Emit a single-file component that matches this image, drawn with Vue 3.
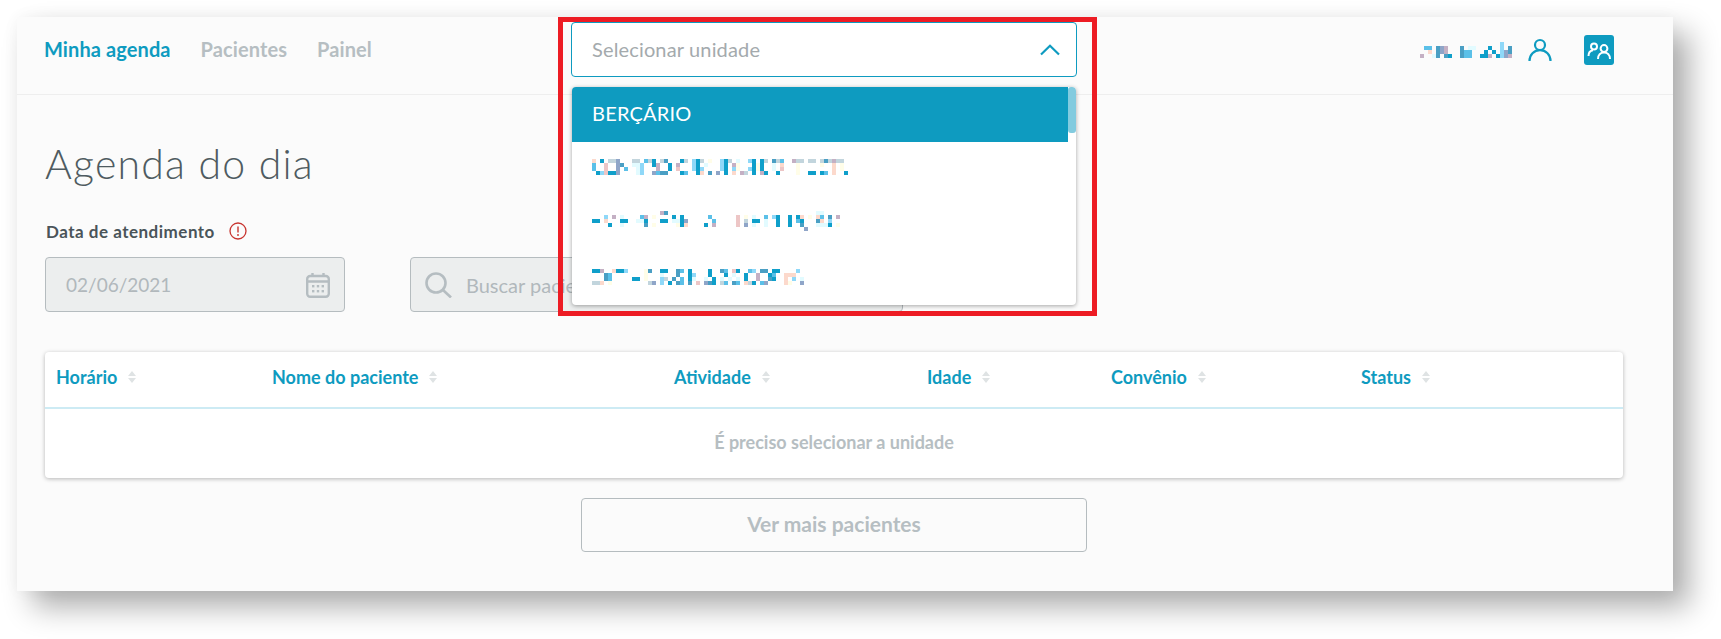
<template>
  <div class="page">
    <div class="panel">
      <header class="topbar">
        <nav class="nav-links">
          <a class="nav-link active">Minha agenda</a>
          <a class="nav-link">Pacientes</a>
          <a class="nav-link">Painel</a>
        </nav>

        <div class="unit-select">
          <div class="select-box">
            <span class="select-label">Selecionar unidade</span>
            <svg width="20" height="12" viewBox="0 0 20 12" fill="none">
              <path d="M1 10.500 10 1.800l9 8.700" stroke="#0e9bc0" stroke-width="2.200" />
            </svg>
          </div>
          <div class="select-menu">
            <div class="option selected">BERÇÁRIO</div>
            <div v-for="(rows, i) in blurredUnits" :key="i" class="option">
              <svg :width="mosaicWidth(rows)" :height="rows.length * 4" shape-rendering="crispEdges">
                <rect v-for="(c, j) in cells(rows)" :key="j" :x="c.x" :y="c.y" width="4" height="4" :fill="c.fill" />
              </svg>
            </div>
            <div class="scroll-thumb"></div>
          </div>
          <div class="highlight"></div>
        </div>

        <div class="user-area">
          <svg class="blurred-name" :width="mosaicWidth(blurredUser)" :height="blurredUser.length * 4" shape-rendering="crispEdges">
            <rect v-for="(c, j) in cells(blurredUser)" :key="j" :x="c.x" :y="c.y" width="4" height="4" :fill="c.fill" />
          </svg>
          <svg class="user-icon" width="24" height="24" viewBox="0 0 24 24" fill="none" stroke="#0e9bc0" stroke-width="2.200">
            <circle cx="12" cy="7" r="5" />
            <path d="M1.500 23c0-6 4.500-10.800 10.500-10.800S22.500 17 22.500 23" />
          </svg>
          <div class="team-button">
            <svg width="30" height="30" viewBox="0 0 30 30" fill="none" stroke="#fff" stroke-width="2">
              <circle cx="10" cy="11.500" r="3" />
              <path d="M4.500 21c0-3.500 1.800-5.500 4.500-5.800" />
              <circle cx="20" cy="13.500" r="3.400" />
              <path d="M14 24c0-4 2.500-6.500 6-6.500s6 2.500 6 6.500" />
            </svg>
          </div>
        </div>
      </header>

      <main class="content">
        <h1 class="title">Agenda do dia</h1>

        <div class="date-label">
          <span>Data de atendimento</span>
          <svg width="18" height="18" viewBox="0 0 18 18" fill="none">
            <circle cx="9" cy="9" r="8" stroke="#c8342f" stroke-width="1.300" />
            <path d="M9 4.500v6" stroke="#c8342f" stroke-width="1.400" />
            <circle cx="9" cy="13" r="0.900" fill="#c8342f" />
          </svg>
        </div>

        <div class="filters">
          <div class="field date-field">
            <span class="field-text">02/06/2021</span>
            <svg width="24" height="26" viewBox="0 0 24 26" fill="none">
              <rect x="1.200" y="4" width="21.600" height="20.800" rx="3" stroke="#b5bdc1" stroke-width="2.400" />
              <path d="M1.500 9.500h21M6.500 1v4M17.500 1v4" stroke="#b5bdc1" stroke-width="2.400" />
              <g fill="#b5bdc1">
                <rect x="6" y="13" width="2.400" height="2.400" />
                <rect x="10.800" y="13" width="2.400" height="2.400" />
                <rect x="15.600" y="13" width="2.400" height="2.400" />
                <rect x="6" y="18" width="2.400" height="2.400" />
                <rect x="10.800" y="18" width="2.400" height="2.400" />
                <rect x="15.600" y="18" width="2.400" height="2.400" />
              </g>
            </svg>
          </div>
          <div class="field search-field">
            <svg width="27" height="26" viewBox="0 0 27 26" fill="none" stroke="#b5bdc1">
              <circle cx="11" cy="11" r="9.500" stroke-width="2.600" />
              <path d="m18 18 8 7.500" stroke-width="2.600" />
            </svg>
            <span class="field-text search-text">Buscar paciente</span>
          </div>
        </div>

        <section class="table-card">
          <div class="table-head">
            <div v-for="col in columns" :key="col" class="head-cell">
              <span>{{ col }}</span>
              <svg width="8" height="12" viewBox="0 0 8 12" fill="#dfe3e4">
                <path d="M4 0 8 5H0zM4 12 0 7h8z" />
              </svg>
            </div>
          </div>
          <div class="table-empty">É preciso selecionar a unidade</div>
        </section>

        <button class="more-button" type="button">Ver mais pacientes</button>
      </main>
    </div>
  </div>
</template>

<script setup>
const columns = ["Horário", "Nome do paciente", "Atividade", "Idade", "Convênio", "Status"];

const palette = {
  b: "#0f9fca",
  l: "#8fd8f8",
  m: "#5bc0e8",
  g: "#c2d5dd",
  p: "#edc6c6",
  o: "#fcd9cc",
  y: "#fffde8",
  c: "#e2fbff",
  s: "#8fa5c8",
  v: "#c4b0c4",
  t: "#4a9fc4",
};

// nomes borrados na captura original, 4px por bloco
const blurredUnits = [
  [
    "o.b.ggs...gg.mgb.gt...bg.lbg.y..lbg.c..lb.bg.tgm..vgg.gg.gtgvgg.",
    "m..p..st..ccl..bv..b.v...lb.c...lb.vy...byb..c.o...y.....y..o.y.",
    "m..p..s.m..cl...v..b.p...lbl....lb.ly..lbyb..c.p...y........o.y.",
    ".blpbbs....cl..smtt...bm..bo.t.s.b.o.vg.b.vb..b....y..bb.bm.o..b",
    "",
  ],
  [
    ".................vt.....................................cc",
    "...l.v.c....mv.y....b.b......m......p.y.c..m.lb..b.bo.y.om.t.v",
    "bb.o...bb..ccb...bb.ccbs......m.....p.g.bb.c..b..b.mb...to.l..",
    "....b..c.....t.y.....ybo....b.v.....p.s.c..c..b..b..t...cccb.y",
    ".....................................................s",
    "",
  ],
  [
    "bbv..obbl....yt..bb..tm.b....b..tm.pb..ml.tt.bb....l",
    "...tm........y...c...t..bl...b...b.c..b..v..bm..ooo",
    "...tm.....bb.y...lg.t.m.bc..c.b.c.c.c.b..v..tb..o.l.c",
    "ggo.y.........gs.l.b.tm.t.p.stb.gm.tm.ogb.ms....oy..s",
  ],
];

const blurredUser = [
  "....................l",
  ".mm.tsv...t.cc...b..l.t",
  "..o.tsv...tmm...b.b.lst",
  "v..ct.tb..tmm..bbv.blsv",
];

const mosaicWidth = (rows) => Math.max(...rows.map((r) => r.length)) * 4;

const cells = (rows) => {
  const out = [];
  rows.forEach((row, y) => {
    [...row].forEach((ch, x) => {
      if (palette[ch]) out.push({ x: x * 4, y: y * 4, fill: palette[ch] });
    });
  });
  return out;
};
</script>

<style>
html,
body {
  margin: 0;
  background: #fff;
}
</style>

<style scoped>
.page {
  width: 1721px;
  height: 639px;
  box-sizing: border-box;
  padding: 17px 48px 48px 17px;
  overflow: hidden;
  font-family: Lato, "Open Sans", sans-serif;
  background: #fff;
}

.panel {
  height: 574px;
  background: #fbfbfb;
  box-shadow: 16px 16px 28px rgba(0, 0, 0, 0.32), 0 0 16px rgba(0, 0, 0, 0.04);
}

.topbar {
  display: flex;
  align-items: center;
  height: 55px;
  padding: 5px 59px 17px 27px;
  border-bottom: 1px solid #eeeeee;
}

.nav-links {
  display: flex;
  gap: 30px;
  width: 527px;
  padding-bottom: 2px;
  box-sizing: border-box;
}

.nav-link {
  font-size: 20px;
  font-weight: 700;
  letter-spacing: 0.1px;
  color: #b6bec2;
}

.nav-link.active {
  color: #0e9bc0;
}

.unit-select {
  position: relative;
  width: 506px;
  height: 55px;
}

.select-box {
  display: flex;
  align-items: center;
  justify-content: space-between;
  box-sizing: border-box;
  height: 55px;
  padding: 0 16px 0 20px;
  border: 1px solid #0e9bc0;
  border-radius: 4px;
  background: #fff;
  font-size: 20px;
  letter-spacing: 0.15px;
  color: #a4aaad;
}

.select-label {
  padding-bottom: 2px;
}

.select-menu {
  position: absolute;
  top: 65px;
  left: 1px;
  right: 1px;
  z-index: 2;
  height: 218px;
  overflow: hidden;
  border-radius: 4px;
  background: #fff;
  box-shadow: 0 1px 4px rgba(0, 0, 0, 0.35);
}

.option {
  display: flex;
  align-items: center;
  height: 54px;
  padding-left: 20px;
}

.option:last-of-type {
  height: 52px;
}

.option.selected {
  box-sizing: border-box;
  height: 55px;
  margin-right: 8px;
  padding-bottom: 4px;
  font-size: 20px;
  letter-spacing: 0.2px;
  color: #fff;
  background: #0e9bc0;
}

.scroll-thumb {
  position: absolute;
  top: 0;
  right: 0;
  width: 8px;
  height: 46px;
  border-radius: 3px;
  background: #82cbdf;
}

.highlight {
  position: absolute;
  top: -5px;
  left: -13px;
  right: -20px;
  bottom: -239px;
  z-index: 3;
  border: 5px solid #ed1c24;
  pointer-events: none;
}

.user-area {
  display: flex;
  align-items: center;
  margin-left: auto;
}

.blurred-name {
  margin-right: 16px;
}

.user-icon {
  margin-right: 32px;
}

.team-button {
  display: flex;
  align-items: center;
  justify-content: center;
  width: 30px;
  height: 30px;
  border-radius: 3px;
  background: #0e9bc0;
}

.content {
  padding: 0 50px 0 28px;
}

.title {
  margin: 45px 0 0;
  font-size: 41px;
  line-height: 48px;
  font-weight: 300;
  letter-spacing: 1.200px;
  color: #4f5b61;
}

.date-label {
  display: flex;
  align-items: center;
  gap: 14px;
  height: 20px;
  margin-top: 33px;
  padding-left: 1px;
  font-size: 17px;
  font-weight: 700;
  letter-spacing: 0.5px;
  color: #4a5459;
}

.filters {
  display: flex;
  gap: 65px;
  margin-top: 16px;
}

.field {
  display: flex;
  align-items: center;
  box-sizing: border-box;
  height: 55px;
  border: 1px solid #b5bcbf;
  border-radius: 4px;
  background: #eceeee;
}

.field-text {
  font-size: 19px;
  color: #b1b8bc;
}

.search-text {
  font-size: 20px;
}

.date-field {
  justify-content: space-between;
  width: 300px;
  padding: 0 14px 0 20px;
}

.search-field {
  gap: 14px;
  width: 493px;
  padding-left: 14px;
}

.table-card {
  margin-top: 40px;
  border-radius: 4px;
  background: #fff;
  box-shadow: 0 1px 4px rgba(0, 0, 0, 0.28);
}

.table-head {
  display: grid;
  grid-template-columns: 216px 402px 253px 184px 250px 1fr;
  align-items: center;
  height: 50px;
  padding-bottom: 5px;
  padding-left: 11px;
  border-bottom: 2px solid #cdebf4;
}

.head-cell {
  display: flex;
  align-items: center;
  gap: 11px;
  font-size: 18px;
  font-weight: 700;
  color: #0e9bc0;
}

.table-empty {
  height: 69px;
  line-height: 67px;
  text-align: center;
  font-size: 18px;
  font-weight: 700;
  color: #b6bec2;
}

.more-button {
  display: block;
  width: 506px;
  height: 54px;
  margin: 20px auto 0;
  padding-bottom: 5px;
  border: 1px solid #b5bcbf;
  border-radius: 4px;
  background: #fbfbfb;
  font-family: inherit;
  font-size: 21px;
  font-weight: 700;
  color: #b6bec2;
}
</style>
